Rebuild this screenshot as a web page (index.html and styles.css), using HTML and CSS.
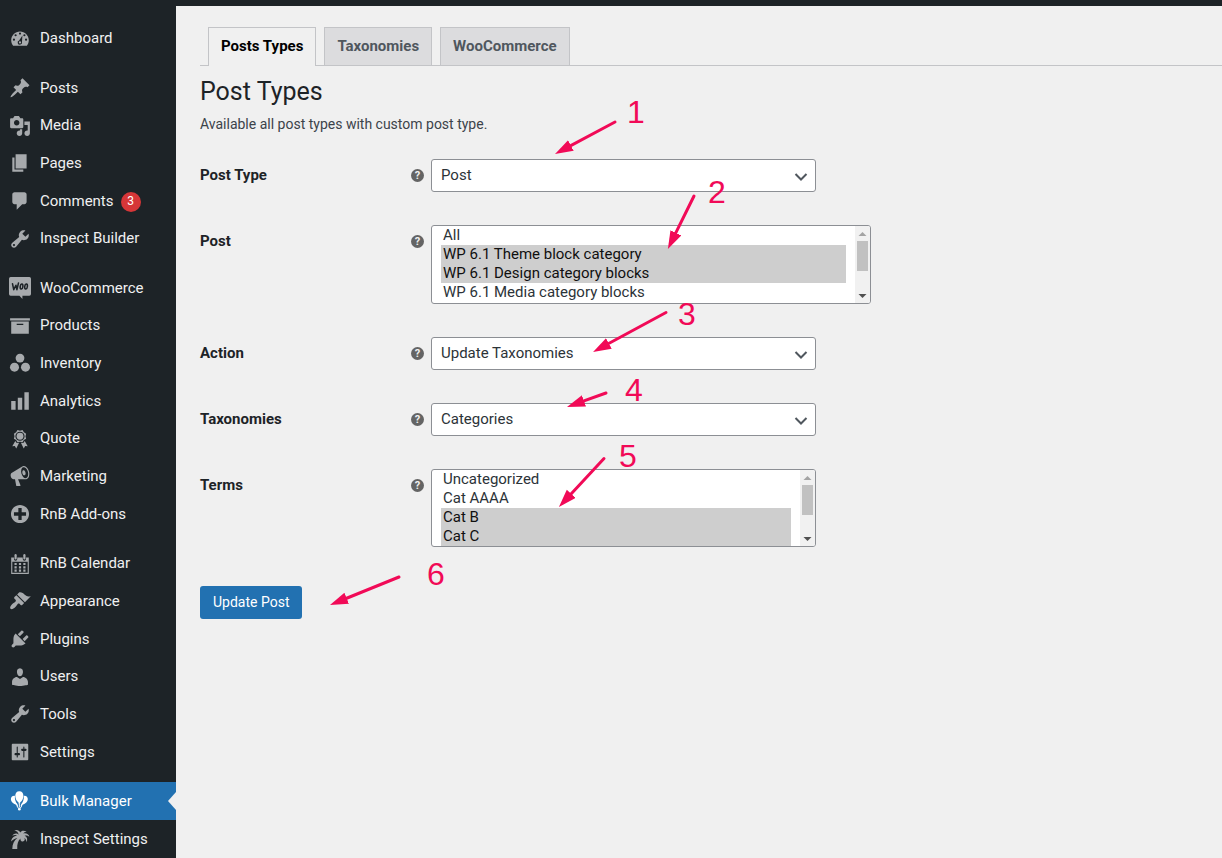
FILE: index.html
```html
<!DOCTYPE html>
<html lang="en">
<head>
<meta charset="utf-8">
<title>Bulk Manager</title>
<link rel="stylesheet" href="styles.css">
</head>
<body>
<svg class="defs" aria-hidden="true">
  <symbol id="tools" viewBox="0 0 20 20"><path d="M16.680 9.770c-1.340 1.340-3.300 1.670-4.950.99l-5.410 6.520c-.99.99-2.590.99-3.580 0s-.99-2.590 0-3.570l6.520-5.420c-.68-1.650-.35-3.610.99-4.950 1.280-1.280 3.120-1.620 4.720-1.060l-2.890 2.890 2.820 2.820 2.860-2.870c.53 1.580.18 3.390-1.080 4.650zM3.810 16.210c.4.39 1.040.39 1.430 0 .4-.4.4-1.040 0-1.430-.39-.4-1.030-.4-1.430 0-.39.39-.39 1.030 0 1.430z"/></symbol>
  <symbol id="chevron" viewBox="0 0 20 20"><path d="M4.500 7l5.500 5.500L15.500 7" fill="none" stroke="currentColor" stroke-width="2"/></symbol>
  <symbol id="up" viewBox="0 0 15 15"><path d="M3.500 10l4-4 4 4z"/></symbol>
  <symbol id="down" viewBox="0 0 15 15"><path d="M3.500 6l4 4 4-4z"/></symbol>
</svg>

<div class="page">
  <nav class="sidebar" aria-label="Main menu">
    <ul class="menu">
      <li><a class="item" href="#"><svg class="icon" viewBox="0 0 20 20"><path fill-rule="evenodd" d="M3.760 17h12.480c1.100-1.370 1.760-3.110 1.760-5 0-4.420-3.580-8-8-8s-8 3.580-8 8c0 1.890.66 3.630 1.760 5zM10 5a1 1 0 1 1 0 2 1 1 0 0 1 0-2zM6 6.500a1 1 0 1 1 0 2 1 1 0 0 1 0-2zM14 6.500a1 1 0 1 1 0 2 1 1 0 0 1 0-2zM4.500 10.500a1 1 0 1 1 0 2 1 1 0 0 1 0-2zM15.500 10.500a1 1 0 1 1 0 2 1 1 0 0 1 0-2zM12.200 7.800l-.4 5.800a2 2 0 1 1-2.600-1.400zM10 13a1 1 0 1 0 0 2 1 1 0 0 0 0-2z"/></svg>Dashboard</a></li>
    </ul>
    <ul class="menu">
      <li><a class="item" href="#"><svg class="icon" viewBox="0 0 20 20"><path d="M10.440 3.020l1.820-1.820 6.360 6.350-1.830 1.820c-1.050-.68-2.480-.57-3.410.36l-.75.75c-.92.93-1.040 2.350-.35 3.410l-1.830 1.820-2.410-2.410-2.800 2.790c-.42.42-3.380 2.710-3.800 2.290s1.860-3.390 2.280-3.810l2.790-2.790L4.100 9.360l1.830-1.820c1.050.69 2.480.57 3.400-.36l.75-.75c.93-.92 1.050-2.350.36-3.410z"/></svg>Posts</a></li>
      <li><a class="item" href="#"><svg class="icon" viewBox="0 0 20 20"><path d="M13 11V4c0-.55-.45-1-1-1h-1.670L9 1H5L3.670 3H2c-.55 0-1 .45-1 1v7c0 .55.45 1 1 1h10c.55 0 1-.45 1-1zM7 4.500c1.380 0 2.500 1.120 2.500 2.500S8.380 9.500 7 9.500 4.500 8.380 4.500 7 5.620 4.500 7 4.500zM14 6h5v10.500c0 1.380-1.120 2.500-2.500 2.500S14 17.880 14 16.500s1.120-2.500 2.500-2.500c.17 0 .34.02.5.05V9h-3V6zm-4 8.050V13h2v3.500c0 1.380-1.120 2.500-2.500 2.500S7 17.880 7 16.500 8.120 14 9.500 14c.17 0 .34.02.5.05z"/></svg>Media</a></li>
      <li><a class="item" href="#"><svg class="icon" viewBox="0 0 20 20"><path d="M6 15V2h10v13H6zm-1 1h8v2H3V5h2v11z"/></svg>Pages</a></li>
      <li><a class="item" href="#"><svg class="icon" viewBox="0 0 20 20"><path d="M5 2h9c1.100 0 2 .9 2 2v7c0 1.100-.9 2-2 2h-2l-5 5v-5H5c-1.100 0-2-.9-2-2V4c0-1.100.9-2 2-2z"/></svg>Comments<span class="count">3</span></a></li>
      <li><a class="item" href="#"><svg class="icon"><use href="#tools"/></svg>Inspect Builder</a></li>
    </ul>
    <ul class="menu">
      <li><a class="item" href="#"><svg class="icon" viewBox="0 0 20 20"><path d="M1.500 0h17A1.500 1.500 0 0 1 20 1.500v14a1.500 1.500 0 0 1-1.500 1.500H12.200v3L9.500 17h-8A1.500 1.500 0 0 1 0 15.500v-14A1.500 1.500 0 0 1 1.500 0z"/><path d="M3.200 6.200l1.100 5.300 2-4 .9 4 1.400-6" fill="none" stroke="#1d2327" stroke-width="1.400" stroke-linejoin="round" stroke-linecap="round"/><ellipse cx="11.400" cy="8.700" rx="1.200" ry="2.300" transform="rotate(8 11.400 8.700)" fill="none" stroke="#1d2327" stroke-width="1.400"/><ellipse cx="15.500" cy="8.700" rx="1.200" ry="2.300" transform="rotate(8 15.500 8.700)" fill="none" stroke="#1d2327" stroke-width="1.400"/></svg>WooCommerce</a></li>
      <li><a class="item" href="#"><svg class="icon" viewBox="0 0 20 20"><path d="M19 3v2H1V3h18zM2 6h16v11H2V6zm11 3V8H7v1h6z"/></svg>Products</a></li>
      <li><a class="item" href="#"><svg class="icon" viewBox="0 0 20 20"><circle cx="10" cy="5.500" r="4"/><circle cx="5" cy="13.800" r="4.100"/><circle cx="15" cy="13.800" r="4.100"/></svg>Inventory</a></li>
      <li><a class="item" href="#"><svg class="icon" viewBox="0 0 20 20"><path d="M18 18V2h-4v16h4zm-6 0V7H8v11h4zm-6 0v-8H2v8h4z"/></svg>Analytics</a></li>
      <li><a class="item" href="#"><svg class="icon" viewBox="0 0 20 20"><path fill-rule="evenodd" d="M4.460 5.160L5 7.460l-.54 2.290 2.010 1.240L7.700 13l2.300-.54 2.300.54 1.230-2.010 2.010-1.240L15 7.460l.54-2.300-2-1.240-1.240-2.010-2.300.55-2.290-.54-1.250 2zM10 3.300a4.200 4.200 0 1 1 0 8.400 4.200 4.200 0 0 1 0-8.400z"/><circle cx="10" cy="7.500" r="3.100"/><path d="M7 13.700l-1.300-1.900L3 16.500l2.300-.2 1.300 2.400 2.600-5.200zM13 13.700l1.300-1.900 2.700 4.700-2.300-.2-1.300 2.400-2.600-5.200z"/></svg>Quote</a></li>
      <li><a class="item" href="#"><svg class="icon" viewBox="0 0 20 20"><path d="M18.150 5.940c.46 1.620.38 3.220-.02 4.480-.42 1.280-1.260 2.180-2.300 2.480-.16.06-.26.06-.4.06-.06.02-.12.02-.18.02-.06.02-.14.02-.22.02h-6.800l2.220 5.500c.02.14-.06.26-.14.34-.08.1-.24.16-.34.16H6.950c-.1 0-.26-.06-.34-.16-.08-.08-.16-.2-.14-.34l-1-5.500H4.250l-.02-.02c-.5.06-1.080-.18-1.540-.62s-.88-1.080-1.060-1.880c-.24-.8-.2-1.560-.02-2.200.18-.62.58-1.080 1.060-1.300l.02-.02 9-5.400c.1-.06.18-.1.24-.16.06-.04.14-.08.24-.12.16-.08.28-.12.5-.18 1.040-.3 2.240.1 3.220.98s1.840 2.240 2.260 3.860zm-2.580 5.980h-.02c.4-.1.74-.34 1.040-.7.58-.7.86-1.760.86-3.040 0-.64-.1-1.300-.28-1.980-.34-1.360-1.020-2.500-1.780-3.240s-1.680-1.100-2.460-.88c-.82.22-1.400.96-1.700 2-.32 1.040-.28 2.360.06 3.720.38 1.360 1 2.500 1.800 3.240.78.74 1.620 1.100 2.480.88zm-2.540-7.080c.22-.04.42-.02.62.04.38.16.76.48 1.020 1s.42 1.200.42 1.780c0 .3-.04.56-.12.8-.18.48-.44.84-.86.94-.34.1-.8-.06-1.140-.4s-.64-.86-.78-1.500c-.18-.62-.12-1.240.02-1.720s.48-.84.82-.94z"/></svg>Marketing</a></li>
      <li><a class="item" href="#"><svg class="icon" viewBox="0 0 20 20"><path d="M15.800 4.200c3.200 3.210 3.200 8.390 0 11.600-3.210 3.200-8.390 3.200-11.600 0C1 12.590 1 7.410 4.200 4.200 7.410 1 12.590 1 15.800 4.200zm-4.300 11.300v-4h4v-3h-4v-4h-3v4h-4v3h4v4h3z"/></svg>RnB Add-ons</a></li>
    </ul>
    <ul class="menu">
      <li><a class="item" href="#"><svg class="icon" viewBox="0 0 20 20"><path fill-rule="evenodd" d="M2 4h2.500v1.500a1.500 1.500 0 0 0 3 0V4h5v1.500a1.500 1.500 0 0 0 3 0V4H18v15H2zM3 8v10h14V8z"/><rect x="5" y="1" width="2" height="5" rx="1"/><rect x="13" y="1" width="2" height="5" rx="1"/><path d="M5 9h2v2H5zM9 9h2v2H9zM13 9h2v2h-2zM5 12h2v2H5zM9 12h2v2H9zM13 12h2v2h-2zM5 15h2v2H5zM9 15h2v2H9zM13 15h2v2h-2z"/></svg>RnB Calendar</a></li>
      <li><a class="item" href="#"><svg class="icon" viewBox="0 0 20 20"><path d="M14.480 11.060L7.410 3.990l1.500-1.500c.5-.56 2.300-.47 3.510.32 1.210.8 1.430 1.280 2.910 2.100 1.180.64 2.450 1.260 4.450.85zm-.71.71L6.700 4.700 4.930 6.470c-.39.39-.39 1.020 0 1.410l1.060 1.060c.39.39.39 1.030 0 1.420-.6.6-1.430 1.110-2.210 1.690-.35.26-.7.53-1.010.84C1.430 14.230.4 16.080 1.400 17.070c.99 1 2.840-.03 4.180-1.360.31-.31.58-.66.85-1.020.57-.78 1.080-1.610 1.690-2.210.39-.39 1.020-.39 1.410 0l1.060 1.060c.39.39 1.020.39 1.410 0z"/></svg>Appearance</a></li>
      <li><a class="item" href="#"><svg class="icon" viewBox="0 0 20 20"><path d="M13.110 4.360L9.870 7.600 8 5.730l3.240-3.240c.35-.34 1.050-.2 1.560.32.52.51.66 1.210.31 1.550zm-8 1.770l.91-1.120 9.010 9.010-1.190.84c-.71.71-2.630 1.160-3.820 1.160H6.140L4.900 17.260c-.59.59-1.540.59-2.120 0-.59-.58-.59-1.530 0-2.120l1.240-1.240v-3.880c0-1.130.4-3.190 1.090-3.890zm7.260 3.970l3.240-3.240c.34-.35 1.040-.21 1.550.31.52.51.66 1.210.31 1.550l-3.240 3.250z"/></svg>Plugins</a></li>
      <li><a class="item" href="#"><svg class="icon" viewBox="0 0 20 20"><path d="M10 9.250c-2.270 0-2.730-3.440-2.730-3.440C7 4.020 7.820 2 9.970 2c2.160 0 2.980 2.020 2.710 3.810 0 0-.41 3.440-2.680 3.440zm0 2.570L12.720 10c2.390 0 4.520 2.330 4.520 4.530v2.490s-3.650 1.130-7.240 1.130c-3.650 0-7.240-1.130-7.240-1.130v-2.490c0-2.250 1.940-4.480 4.470-4.480z"/></svg>Users</a></li>
      <li><a class="item" href="#"><svg class="icon"><use href="#tools"/></svg>Tools</a></li>
      <li><a class="item" href="#"><svg class="icon" viewBox="0 0 20 20"><path d="M17.500 16.500v-13c0-.55-.45-1-1-1h-13c-.55 0-1 .45-1 1v13c0 .55.45 1 1 1h13c.55 0 1-.45 1-1zM8 11h1c.55 0 1 .45 1 1s-.45 1-1 1H8v1.500c0 .28-.22.5-.5.5s-.5-.22-.5-.5V13H6c-.55 0-1-.45-1-1s.45-1 1-1h1V5.500c0-.28.22-.5.5-.5s.5.22.5.5V11zm5-2h-1c-.55 0-1-.45-1-1s.45-1 1-1h1V5.500c0-.28.22-.5.5-.5s.5.22.5.5V7h1c.55 0 1 .45 1 1s-.45 1-1 1h-1v5.500c0 .28-.22.5-.5.5s-.5-.22-.5-.5V9z"/></svg>Settings</a></li>
    </ul>
    <ul class="menu">
      <li><a class="item current" href="#" aria-current="page"><svg class="icon" viewBox="0 0 20 20"><path d="M5.400 5.200C3 4.900 1.600 6.400 1.700 8.400c.1 2.200 2 4.200 4.700 4.900l.9 1.700.9-.6-.6-1.600C6.100 11 5 8.300 5.400 5.200zM13.400 5.200c2.400-.3 3.800 1.200 3.700 3.200-.1 2.200-2 4.200-4.700 4.900l-.9 1.700-.9-.6.6-1.600c1.500-1.800 2.600-4.500 2.200-7.600z"/><path d="M9.400 1.200c2.400 0 3.700 1.800 3.700 4 0 2.600-1.300 5-2.900 6v1.100H8.600v-1.100c-1.600-1-2.900-3.400-2.900-6 0-2.200 1.300-4 3.700-4z"/><path d="M9.400 12v4M7.300 14.500l1.500 2.500M11.500 14.500L10 17" fill="none" stroke="currentColor" stroke-width=".9"/><circle cx="9.400" cy="17.500" r="1.200"/></svg>Bulk Manager</a></li>
      <li><a class="item" href="#"><svg class="icon" viewBox="0 0 20 20"><path d="M8.800 6.200C7.400 4.500 4.600 4.600 3 7c1.600-.8 3-.8 4.300-.2C4.400 7.400 2.200 9 2 12.300c1.500-1.800 3.400-2.900 5.600-3.200C4.700 11.500 3 14.500 3 19h4.500c-.2-4.500.7-7.500 3-9.500a2 2 0 1 0 3.400-.5c1.300.8 2 2.200 2 4 1.300-2.800.6-5-1.700-6 1.500-.3 3-.1 4.300 1C18 5.500 15.600 4.300 12.800 5c.6-1 1.700-1.600 3.200-1.700-2.500-1.500-4.800-1-5.700.7C9.300 2 7 1.200 4.800 2.300 7 2.500 8.500 4 8.800 6.200z"/></svg>Inspect Settings</a></li>
    </ul>
  </nav>

  <main class="content">
    <nav class="tabs" aria-label="Sections">
      <a class="tab active" href="#" aria-current="page">Posts Types</a>
      <a class="tab" href="#">Taxonomies</a>
      <a class="tab" href="#">WooCommerce</a>
    </nav>
    <h1 class="title">Post Types</h1>
    <p class="intro">Available all post types with custom post type.</p>

    <form class="form">
      <div class="row">
        <div class="head"><label for="post-type">Post Type</label><span class="help" aria-hidden="true">?</span></div>
        <div class="field"><select id="post-type" class="select"><option>Post</option></select><svg class="caret"><use href="#chevron"/></svg></div>
      </div>
      <div class="row">
        <div class="head"><label for="post">Post</label><span class="help" aria-hidden="true">?</span></div>
        <div class="field wide">
          <select id="post" class="list" multiple size="4"><option>All</option><option selected>WP 6.1 Theme block category</option><option selected>WP 6.1 Design category blocks</option><option>WP 6.1 Media category blocks</option></select>
          <div class="scrollbar" aria-hidden="true"><svg class="arrow off"><use href="#up"/></svg><div class="thumb"></div><svg class="arrow last"><use href="#down"/></svg></div>
        </div>
      </div>
      <div class="row">
        <div class="head"><label for="action">Action</label><span class="help" aria-hidden="true">?</span></div>
        <div class="field"><select id="action" class="select"><option>Update Taxonomies</option></select><svg class="caret"><use href="#chevron"/></svg></div>
      </div>
      <div class="row">
        <div class="head"><label for="taxonomies">Taxonomies</label><span class="help" aria-hidden="true">?</span></div>
        <div class="field"><select id="taxonomies" class="select"><option>Categories</option></select><svg class="caret"><use href="#chevron"/></svg></div>
      </div>
      <div class="row">
        <div class="head"><label for="terms">Terms</label><span class="help" aria-hidden="true">?</span></div>
        <div class="field">
          <select id="terms" class="list" multiple size="4"><option>Uncategorized</option><option>Cat AAAA</option><option selected>Cat B</option><option selected>Cat C</option></select>
          <div class="scrollbar" aria-hidden="true"><svg class="arrow off"><use href="#up"/></svg><div class="thumb"></div><svg class="arrow last"><use href="#down"/></svg></div>
        </div>
      </div>
      <button class="submit" type="button">Update Post</button>
    </form>
  </main>

  <svg class="notes" width="900" height="640">
    <defs>
      <marker id="head" markerUnits="userSpaceOnUse" markerWidth="20" markerHeight="14" refX="6" refY="6" orient="auto"><path d="M0 0L18 6L0 12z" class="note-head"/></marker>
    </defs>
    <g class="arrows">
      <path d="M615 122L565.600 148.400"/>
      <path d="M694 196L673.200 238.200"/>
      <path d="M666 312.500L603.600 346.300"/>
      <path d="M606 393L578.300 402.900"/>
      <path d="M604 458.500L567.100 498.200"/>
      <path d="M399 577L341.100 600.500"/>
    </g>
    <g class="numbers">
      <text x="627" y="123">1</text>
      <text x="708" y="203">2</text>
      <text x="678" y="325">3</text>
      <text x="625" y="401">4</text>
      <text x="619" y="467">5</text>
      <text x="427" y="585">6</text>
    </g>
  </svg>
</div>
</body>
</html>
```
FILE: styles.css
```css
* { box-sizing: border-box; }

body {
  margin: 0;
  background: #f0f0f0;
  color: #3c434a;
  font-family: Roboto, "Liberation Sans", sans-serif;
  font-size: 15px;
}

.defs { display: none; }

.page {
  position: relative;
  display: flex;
  min-height: 100vh;
}

.sidebar {
  flex: none;
  width: 176px;
  padding-top: 19px;
  background: #1d2327;
}

.menu {
  margin: 0 0 12px;
  padding: 0;
  list-style: none;
}

.menu:last-child { margin-bottom: 0; }

.item {
  position: relative;
  display: flex;
  align-items: center;
  padding: 10px 0 8px;
  color: #f0f0f1;
  line-height: 1.31;
  text-decoration: none;
}

.icon {
  flex: none;
  width: 22px;
  height: 22px;
  margin: -2px 9px -1px;
  color: #a7aaad;
  fill: currentColor;
}

.count {
  width: 20px;
  height: 20px;
  margin: 0 0 -1px 7px;
  border-radius: 50%;
  background: #d63638;
  color: #fff;
  font-size: 12px;
  line-height: 19px;
  text-align: center;
}

.current { background: #2271b1; color: #fff; }
.current .icon { color: #fff; }

.current::after {
  content: "";
  position: absolute;
  top: 50%;
  right: 0;
  margin-top: -9px;
  border: solid transparent;
  border-width: 9px 8px 9px 0;
  border-right-color: #f0f0f0;
}

.content {
  flex: 1;
  min-width: 0;
  padding: 21px 0 24px 24px;
  border-top: 6px solid #1d2327;
}

.tabs {
  display: flex;
  gap: 8px;
  padding-left: 8px;
  border-bottom: 1px solid #c3c4c7;
}

.tab {
  padding: 6px 12px;
  border: 1px solid #c3c4c7;
  border-bottom: 0;
  background: #dcdcde;
  color: #50575e;
  font-weight: 700;
  line-height: 25px;
  text-decoration: none;
}

.active {
  margin-bottom: -1px;
  background: #f0f0f0;
  color: #000;
}

.title {
  margin: 10px 0 0;
  color: #1d2327;
  font-size: 25px;
  font-weight: 400;
  line-height: 32px;
}

.intro {
  margin: 6px 0 0;
  font-size: 14px;
  line-height: 20px;
}

.form {
  display: flex;
  flex-direction: column;
  gap: 33px;
  margin-top: 25px;
}

.row { display: flex; align-items: flex-start; }

.head {
  flex: none;
  display: flex;
  align-items: center;
  justify-content: space-between;
  width: 231px;
  height: 33px;
  padding-right: 7px;
  color: #1d2327;
  font-weight: 700;
}

.head label { padding-bottom: 2px; }

.help {
  width: 13px;
  height: 13px;
  border-radius: 50%;
  background: #646464;
  color: #f0f0f0;
  font-size: 11px;
  line-height: 13px;
  text-align: center;
}

.field { position: relative; flex: 0 1 385px; }
.wide { flex-basis: 440px; }

.select,
.list {
  display: block;
  width: 100%;
  border: 1px solid #8c8f94;
  border-radius: 3px;
  background: #fff;
  color: #2c3338;
  font: inherit;
}

.select {
  height: 33px;
  padding: 0 26px 2px 9px;
  appearance: none;
}

.caret {
  position: absolute;
  top: 8px;
  right: 5px;
  width: 20px;
  height: 20px;
  color: #50575e;
  pointer-events: none;
}

.list {
  height: 78px;
  padding: 0 24px 0 9px;
  overflow-y: scroll;
  scrollbar-width: none;
}

.wide .list { height: 79px; }

.list option { min-height: 19px; padding: 0 2px 1px; }

.scrollbar {
  position: absolute;
  top: 1px;
  right: 1px;
  bottom: 1px;
  display: flex;
  flex-direction: column;
  width: 15px;
  border-radius: 0 2px 2px 0;
  background: #f1f1f1;
  pointer-events: none;
}

.arrow { width: 15px; height: 15px; fill: #505050; }
.off { fill: #a3a3a3; }
.last { margin-top: auto; }

.thumb {
  height: 30px;
  margin: 0 2px;
  background: #c1c1c1;
}

.submit {
  align-self: flex-start;
  height: 33px;
  margin-top: 6px;
  padding: 0 13px 1px;
  border: 0;
  border-radius: 3px;
  background: #2271b1;
  color: #fff;
  font: inherit;
  font-size: 14px;
}

.notes {
  position: absolute;
  top: 0;
  left: 0;
  pointer-events: none;
}

.arrows path {
  fill: none;
  stroke: #f10a57;
  stroke-width: 3;
  stroke-linecap: round;
  marker-end: url(#head);
}

.note-head, .numbers { fill: #f10a57; }

.numbers {
  font-family: "Liberation Sans", sans-serif;
  font-size: 32px;
}
```
